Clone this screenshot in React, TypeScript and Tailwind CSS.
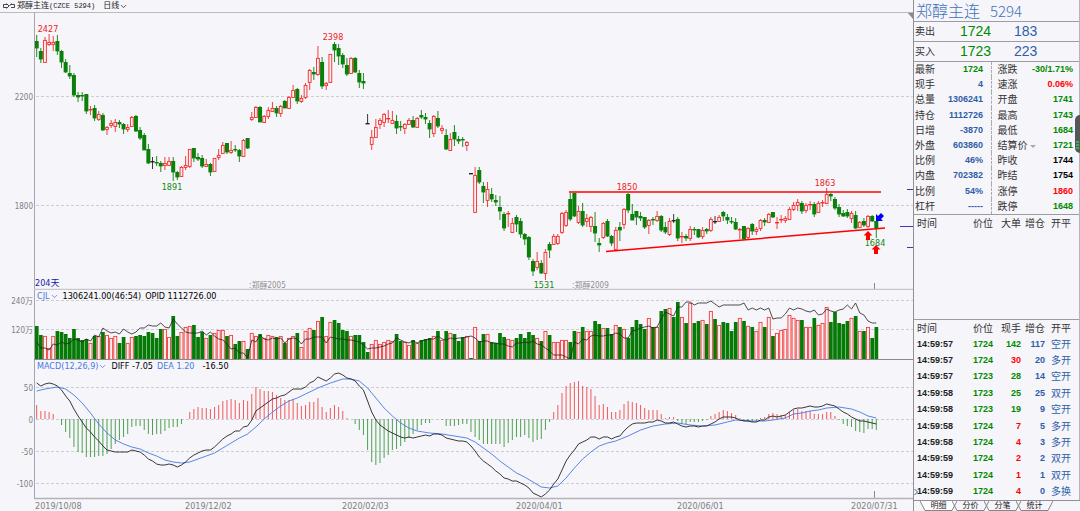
import { useState } from 'react';
import type { ReactNode } from 'react';
import clsx from 'clsx';
import { ChevronDown } from 'lucide-react';

// r = up (hollow red), g = down (solid green), k = unchanged
type Dir = 'r' | 'g' | 'k';

// direction, high, body top, body bottom, low
const CANDLES = `
g 35 41 48 57|g 48 51 59 63|r 37 40 62 62|r 34 42 44 46|r 36 42 44 51|g 35 41 51 55|g 50 51 62 68|g 59 62 72 73
g 65 73 76 79|g 73 75 95 97|g 92 95 97 102|g 92 95 96 101|g 94 94 111 114|r 106 109 110 115|g 105 108 118 121|r 111 114 119 121
g 113 115 130 131|r 126 127 129 135|r 120 123 125 128|r 119 122 126 132|g 120 122 124 128|g 123 124 129 134|r 124 127 129 132|r 116 117 126 127
g 115 116 131 132|g 127 130 138 140|g 133 135 150 150|g 144 149 163 164|k 157 161 162 169|g 156 162 163 166|g 161 163 166 172|r 157 163 165 170
r 157 161 165 166|g 157 161 172 181|g 171 172 177 180|r 166 167 176 177|r 156 165 167 170|r 149 149 166 168|g 148 148 158 162|g 153 157 159 161
g 155 158 166 168|r 159 164 166 167|g 163 164 172 176|r 158 158 171 172|r 149 155 157 160|r 142 145 153 153|g 143 143 152 154|r 141 150 152 154
g 145 149 150 152|g 149 150 156 162|r 139 140 156 157|g 138 138 148 149|r 112 117 119 121|r 106 107 117 117|g 106 107 122 122|r 115 116 122 123
r 107 110 116 119|r 102 108 111 112|g 106 108 113 117|r 105 106 113 117|g 100 101 108 108|r 96 97 108 109|r 85 90 97 98|g 88 89 101 104
r 95 98 101 103|r 83 85 97 99|r 69 70 82 90|g 67 72 74 80|r 46 58 74 76|g 57 62 86 89|r 82 83 85 90|r 54 54 82 83
g 42 44 50 62|g 44 48 56 65|g 53 55 64 68|g 58 65 74 76|r 57 58 73 74|g 57 58 72 73|g 70 73 82 88|g 73 81 83 89
k 114 123 124 124|r 130 137 144 150|r 119 127 137 137|r 118 120 124 129|r 113 114 122 127|r 110 118 119 123|r 111 120 123 123|g 115 121 128 134
g 121 126 127 131|r 123 124 128 134|r 118 120 124 125|g 116 120 127 128|r 117 118 127 127|g 110 115 117 119|g 113 117 119 124|g 120 123 129 138
r 115 116 133 137|g 111 118 126 128|r 125 128 130 134|g 129 135 149 150|r 133 139 150 151|g 125 132 139 146|g 136 139 141 144|g 137 139 140 147
r 141 142 145 151|k 173 173 174 174|r 167 175 212 212|g 167 170 182 184|g 182 186 192 203|r 182 189 200 207|g 188 194 199 202|g 195 200 202 206
g 196 207 211 220|g 212 214 228 231|r 211 213 214 227|r 218 223 232 233|g 215 217 224 232|g 218 221 234 238|g 233 234 239 245|g 236 237 257 260
g 259 261 271 276|r 252 261 267 270|g 260 263 273 274|r 249 252 273 280|g 242 244 250 258|r 234 236 244 244|r 234 236 243 245|r 212 213 232 234
r 210 212 225 227|g 193 199 219 221|g 193 193 216 217|r 206 211 222 224|g 203 211 225 227|r 214 218 221 227|r 216 217 226 232|g 212 226 233 242
g 238 243 245 252|r 222 223 237 239|g 219 221 236 237|g 235 236 243 246|r 227 230 249 251|g 222 227 230 241|r 208 209 224 229|g 193 194 210 213
g 204 214 220 220|g 211 211 217 225|g 212 216 218 221|g 217 217 227 229|r 219 220 225 234|g 217 219 220 225|r 211 216 220 222|g 215 216 230 232
g 222 227 232 234|r 218 221 234 236|k 214 220 221 223|g 217 219 238 241|r 232 236 237 243|g 234 236 238 241|r 226 229 238 241|g 227 229 230 235
g 229 229 237 238|r 227 230 236 239|g 228 229 231 234|r 217 219 230 232|k 216 221 222 224|r 215 217 221 222|g 211 212 216 221|g 214 217 220 224
g 217 221 222 224|g 218 222 229 230|r 228 229 230 239|g 226 226 239 239|r 227 228 237 239|g 223 224 231 235|r 227 229 231 235|r 219 220 228 231
g 218 220 222 226|r 213 214 222 223|g 212 212 217 218|r 217 222 223 229|r 215 219 220 223|r 216 218 220 223|r 207 209 219 220|r 202 205 209 211
r 199 202 205 211|g 201 203 211 214|r 203 205 210 213|r 201 204 205 210|g 202 204 214 217|r 201 203 212 213|r 200 202 203 207|r 188 194 203 204
g 193 194 196 201|g 197 199 208 210|g 204 207 214 217|g 210 213 216 217|g 209 212 216 218|r 211 213 218 223|g 211 215 228 229|r 221 222 227 228
g 218 221 225 227|r 215 216 226 228|g 215 216 221 222|g 221 221 228 238`
  .trim()
  .split(/[|\n]/)
  .map((row) => {
    const [dir, ...values] = row.split(' ');
    const [high, top, bottom, low] = values.map(Number);
    return { dir: dir as Dir, high, top, bottom, low };
  });

const VOLUMES = [
  33, 24, 23, 11, 23, 28, 27, 25, 21, 30, 21, 19, 20, 16, 23, 23, 27, 24, 21, 23, 16, 22, 16, 22, 23, 24, 23, 27, 26, 21,
  30, 30, 22, 43, 23, 27, 32, 33, 34, 22, 27, 21, 24, 26, 29, 29, 23, 24, 15, 18, 18, 10, 26, 23, 25, 21, 24, 23, 22, 23,
  16, 21, 23, 26, 12, 28, 31, 29, 38, 42, 23, 37, 39, 36, 29, 28, 23, 24, 24, 17, 7, 15, 19, 15, 17, 19, 18, 25, 18, 17,
  14, 19, 16, 19, 20, 21, 23, 28, 19, 28, 26, 25, 18, 22, 23, 1, 32, 18, 25, 25, 17, 16, 26, 22, 20, 19, 21, 25, 21, 27,
  24, 21, 18, 28, 24, 17, 17, 19, 19, 17, 28, 27, 32, 28, 28, 38, 35, 31, 31, 25, 34, 32, 30, 21, 32, 39, 35, 30, 41, 32,
  32, 48, 50, 51, 42, 57, 42, 36, 56, 36, 38, 39, 35, 48, 40, 34, 37, 36, 28, 37, 41, 38, 33, 32, 28, 37, 32, 42, 23, 26,
  29, 30, 44, 41, 39, 39, 32, 32, 41, 34, 36, 52, 37, 47, 36, 35, 38, 41, 43, 28, 28, 32, 21, 32,
];

const OPEN_INTEREST = [
  342, 348, 348, 350, 344, 345, 342, 344, 343, 339, 340, 342, 339, 341, 335, 337, 328, 331, 333, 332, 334, 329, 332, 334,
  332, 328, 328, 325, 326, 326, 323, 327, 328, 319, 324, 328, 332, 333, 333, 333, 331, 335, 332, 336, 339, 340, 344, 349,
  348, 353, 353, 358, 340, 342, 335, 339, 340, 338, 339, 338, 343, 339, 338, 339, 344, 339, 339, 337, 337, 337, 343, 337,
  338, 339, 339, 340, 340, 341, 342, 345, 349, 348, 348, 347, 346, 344, 343, 338, 340, 342, 343, 341, 343, 341, 340, 339,
  339, 336, 339, 340, 338, 339, 338, 338, 337, 336, 338, 342, 341, 341, 343, 343, 344, 344, 346, 347, 343, 343, 342, 343,
  341, 344, 345, 348, 351, 355, 355, 355, 357, 359, 342, 344, 339, 340, 336, 335, 336, 336, 335, 335, 333, 334, 338, 338,
  331, 330, 328, 327, 326, 328, 327, 319, 312, 314, 316, 307, 307, 302, 302, 305, 303, 303, 303, 301, 304, 307, 305, 305,
  305, 305, 305, 303, 310, 308, 310, 308, 310, 308, 319, 318, 318, 314, 308, 310, 308, 309, 311, 312, 310, 315, 314, 309,
  311, 312, 310, 309, 305, 309, 303, 313, 315, 321, 323, 323,
];

const HISTOGRAM = [
  14, 8, 8, 7, 5, 0, -6, -13, -19, -28, -33, -34, -38, -38, -38, -37, -37, -35, -30, -25, -21, -18, -15, -8, -7, -7, -11,
  -15, -16, -15, -15, -12, -9, -8, -8, -5, 0, 7, 10, 12, 11, 11, 10, 12, 14, 18, 19, 20, 19, 16, 19, 18, 25, 32, 30, 28,
  28, 27, 24, 21, 19, 19, 20, 16, 13, 14, 17, 17, 21, 12, 7, 11, 14, 12, 8, 1, 0, -5, -11, -16, -31, -43, -46, -44, -39,
  -36, -31, -30, -27, -23, -19, -15, -11, -6, -4, -4, 0, 0, -1, -7, -7, -7, -6, -5, -5, -13, -18, -21, -25, -25, -25, -25,
  -25, -28, -24, -21, -18, -18, -16, -19, -23, -21, -20, -11, -3, 7, 14, 26, 33, 36, 37, 38, 33, 32, 30, 23, 14, 15, 12, 7,
  7, 9, 15, 18, 17, 16, 14, 11, 9, 9, 9, 5, 1, 2, 2, -2, -5, -5, -3, -3, -3, -2, -1, 3, 5, 7, 9, 8, 6, 4, 1, -2, -3, -3,
  -2, 1, 2, 5, 6, 5, 4, 4, 7, 9, 10, 8, 8, 8, 5, 5, 5, 7, 7, 3, -1, -5, -7, -8, -12, -13, -14, -10, -10, -11,
];

const DIFF = [
  383, 386, 384, 383, 384, 386, 390, 396, 401, 409, 416, 422, 428, 432, 437, 441, 446, 450, 451, 452, 452, 452, 452, 450,
  451, 452, 455, 459, 461, 464, 465, 465, 464, 465, 467, 465, 462, 458, 455, 453, 451, 450, 450, 447, 443, 439, 436, 434,
  431, 431, 427, 426, 420, 411, 408, 405, 402, 399, 398, 396, 395, 392, 389, 389, 389, 387, 383, 381, 377, 379, 381, 378,
  374, 373, 375, 378, 379, 381, 386, 390, 401, 412, 420, 425, 428, 431, 433, 435, 437, 438, 437, 438, 437, 436, 435, 436,
  434, 434, 435, 438, 439, 440, 441, 441, 442, 446, 451, 457, 461, 464, 467, 471, 474, 478, 479, 481, 481, 483, 485, 488,
  493, 495, 497, 494, 490, 484, 479, 470, 461, 455, 450, 444, 442, 440, 437, 437, 439, 437, 437, 439, 437, 436, 431, 427,
  424, 423, 423, 423, 422, 422, 420, 421, 423, 423, 422, 424, 426, 427, 426, 426, 427, 426, 426, 424, 422, 419, 417, 417,
  417, 418, 420, 421, 421, 422, 422, 420, 420, 417, 416, 417, 416, 415, 412, 409, 408, 408, 407, 406, 407, 407, 406, 404,
  405, 406, 409, 412, 414, 417, 419, 421, 421, 422, 423, 424,
];

// the signal line is smooth, so only its turning points are kept: [bar, y]
const DEA = [
  [0, 391], [2, 389], [5, 387], [7, 389], [9, 395], [11, 403], [13, 413], [15, 424], [17, 433], [19, 440], [21, 444],
  [23, 447], [25, 449], [27, 453], [29, 456], [31, 460], [33, 462], [35, 463], [37, 462], [39, 459], [41, 456], [43, 453],
  [45, 448], [47, 443], [49, 438], [51, 434], [53, 427], [55, 419], [57, 412], [59, 406], [61, 401], [63, 398], [65, 394],
  [68, 388], [71, 383], [74, 379], [76, 379], [78, 381], [80, 388], [82, 398], [84, 408], [86, 416], [88, 423], [90, 428],
  [92, 431], [95, 433], [98, 434], [101, 436], [104, 438], [106, 442], [108, 448], [110, 454], [112, 461], [114, 467],
  [116, 473], [118, 477], [120, 482], [122, 487], [124, 488], [126, 486], [128, 478], [130, 468], [132, 459], [134, 452],
  [136, 446], [138, 443], [140, 441], [143, 436], [146, 430], [149, 426], [152, 424], [155, 423], [158, 425], [161, 426],
  [164, 425], [167, 422], [169, 420], [173, 421], [176, 421], [178, 420], [181, 418], [183, 414], [185, 413], [187, 411],
  [189, 410], [191, 408], [194, 407], [197, 409], [199, 412], [201, 416], [203, 418],
];

const FIRST_X = 36.7;
const STEP = 4.136;
const barX = (i: number) => FIRST_X + i * STEP;
const toPoints = (rows: number[][]) => rows.map(([i, y]) => `${barX(i).toFixed(1)},${y}`).join(' ');

const STROKE: Record<Dir, string> = { r: '#f42a2a', g: '#0a7f0a', k: '#222222' };

function GridLine({ y, label }: { y: number; label: string }) {
  return (
    <>
      <line x1="36" x2="913" y1={y + 0.5} y2={y + 0.5} stroke="#cdcdd3" strokeDasharray="3 2" />
      <text x="33" y={y + 4} textAnchor="end" className="fill-[#808080] text-[8px]">
        {label}
      </text>
    </>
  );
}

function UpArrow({ x, y }: { x: number; y: number }) {
  return <path d={`M${x} ${y}l4.5 4.5h-2.5v4.5h-4v-4.5h-2.5z`} fill="#ff0000" />;
}

function PriceChart() {
  return (
    <svg viewBox="0 12 913 278" className="block w-full" role="img" aria-label="日线">
      <GridLine y={96} label="2200" />
      <GridLine y={205} label="1800" />

      {CANDLES.map(({ dir, high, top, bottom, low }, i) => {
        const x = barX(i);
        const tall = bottom - top > 1;
        return (
          <g key={i} stroke={STROKE[dir]} strokeWidth="0.9">
            {dir === 'r' && tall ? (
              <>
                <path d={`M${x} ${high}V${top}M${x} ${bottom}V${low}`} />
                <rect x={x - 1.4} y={top + 0.4} width="2.8" height={bottom - top} fill="#f9f0f3" />
              </>
            ) : (
              <>
                <path d={`M${x} ${high}V${low}`} />
                <rect
                  x={x - 2}
                  y={top}
                  width="4"
                  height={Math.max(1, bottom - top + 0.4)}
                  fill={STROKE[dir]}
                  stroke="none"
                />
              </>
            )}
          </g>
        );
      })}

      {/* trend lines */}
      <path d="M569 192H881M606 251.5L885 228" stroke="#ff0000" strokeWidth="1.5" fill="none" />

      {/* price labels */}
      <g className="text-[9px]" textAnchor="middle" fill="#ee1c25">
        <text x="48" y="32">2427</text>
        <text x="333" y="40">2398</text>
        <text x="627" y="190">1850</text>
        <text x="825" y="186">1863</text>
      </g>
      <g className="text-[9px]" textAnchor="middle" fill="#118811">
        <text x="172" y="190">1891</text>
        <text x="544" y="288">1531</text>
        <text x="875" y="246">1684</text>
      </g>

      {/* signals */}
      <UpArrow x={868} y={231} />
      <UpArrow x={876} y={245} />
      <path d="M876 221v-7l2 2 3-3 3 3-3 3 2 2z" fill="#0000ff" />

      {/* price scale markers */}
      <path d="M907 189.5h6M900 226.5h13M907 247.5h6" stroke="#3a3ab8" />

      <path d="M874.5 283v7" stroke="#8a8a8a" />
      <text x="35" y="286" className="text-[9px]" fill="#1a1aa6">204天</text>
      <g className="text-[8px]" fill="#909090">
        <text x="249" y="288">:郑醇2005</text>
        <text x="572" y="288">:郑醇2009</text>
      </g>
      <path d="M913 12v7l-6-7z" fill="#8a8a8a" />
      <path d="M0 12.5H913" stroke="#bcbcc0" />
      <path d="M34.5 12V290" stroke="#a6a6ac" />
      <path d="M34 289.5H913" stroke="#c8c8cc" strokeWidth="1.5" />
    </svg>
  );
}

function VolumeChart() {
  return (
    <svg viewBox="0 290 913 70" className="block w-full" role="img" aria-label="CJL">
      <GridLine y={300} label="240万" />
      <GridLine y={329} label="120万" />
      {VOLUMES.map((h, i) => {
        const x = barX(i);
        return CANDLES[i].dir === 'r' ? (
          <rect key={i} x={x - 1.5} y={359.4 - h} width="3" height={h} fill="#f9eff2" stroke="#f23c3c" strokeWidth="0.9" />
        ) : (
          <rect key={i} x={x - 1.8} y={359 - h} width="3.7" height={h} fill="#067a06" />
        );
      })}
      <polyline points={toPoints(OPEN_INTEREST.map((y, i) => [i, y]))} fill="none" stroke="#222222" strokeWidth="0.8" />
      <path d="M34.5 290V360" stroke="#a6a6ac" />
      <path d="M34 359.5H913" stroke="#8a8a90" />
    </svg>
  );
}

const DATES: [number, string][] = [
  [35, '2019/10/08'],
  [185, '2019/12/02'],
  [342, '2020/02/03'],
  [516, '2020/04/01'],
  [677, '2020/06/01'],
  [851, '2020/07/31'],
];

function MacdChart() {
  return (
    <svg viewBox="0 360 913 151" className="block w-full" role="img" aria-label="MACD">
      <GridLine y={387} label="50" />
      <GridLine y={419} label="0" />
      <GridLine y={451} label="-50" />
      <GridLine y={483} label="-100" />
      {HISTOGRAM.map((h, i) => (
        <line
          key={i}
          x1={barX(i)}
          x2={barX(i)}
          y1="419"
          y2={419 - h}
          stroke={h > 0 ? '#f04848' : '#3c973c'}
          strokeWidth="0.9"
        />
      ))}
      <polyline points={toPoints(DEA)} fill="none" stroke="#4a78e4" strokeWidth="0.9" />
      <polyline points={toPoints(DIFF.map((y, i) => [i, y]))} fill="none" stroke="#222222" strokeWidth="0.9" />
      <path d="M874.5 491v8" stroke="#8a8a8a" />
      <path d="M34.5 360V499" stroke="#a6a6ac" />
      <path d="M34 498.5H913" stroke="#b4b4b8" strokeWidth="1.5" />
      {DATES.map(([x, label]) => (
        <text key={label} x={x} y="509" className="fill-[#808080] text-[9px]">
          {label}
        </text>
      ))}
    </svg>
  );
}

function IndicatorBar({ name, children }: { name: string; children: ReactNode }) {
  return (
    <div className="absolute top-0 left-[37px] flex h-3 items-center gap-1 text-[9px] leading-3 whitespace-pre">
      <button className="flex items-center text-[#4a78e4]">
        {name}
        <ChevronDown size={9} />
      </button>
      {children}
    </div>
  );
}

type Tone = 'green' | 'red' | 'blue' | 'black';
const TONES: Record<Tone, string> = {
  green: 'text-[#008a00]',
  red: 'text-[#ff0000]',
  blue: 'text-[#2f5ea8]',
  black: 'text-black',
};

const QUOTES: [string, string, Tone, string, string, Tone][] = [
  ['最新', '1724', 'green', '涨跌', '-30/1.71%', 'green'],
  ['现手', '4', 'blue', '速涨', '0.06%', 'red'],
  ['总量', '1306241', 'blue', '开盘', '1741', 'green'],
  ['持仓', '1112726', 'blue', '最高', '1743', 'green'],
  ['日增', '-3870', 'blue', '最低', '1684', 'green'],
  ['外盘', '603860', 'blue', '结算价', '1721', 'green'],
  ['比例', '46%', 'blue', '昨收', '1744', 'black'],
  ['内盘', '702382', 'blue', '昨结', '1754', 'black'],
  ['比例', '54%', 'blue', '涨停', '1860', 'red'],
  ['杠杆', '-----', 'blue', '跌停', '1648', 'green'],
];

const TRADES: [string, string, string, Tone, string, string][] = [
  ['14:59:57', '1724', '142', 'green', '117', '空开'],
  ['14:59:57', '1724', '30', 'red', '20', '多开'],
  ['14:59:57', '1723', '28', 'green', '14', '空开'],
  ['14:59:58', '1723', '25', 'green', '25', '双开'],
  ['14:59:58', '1723', '19', 'green', '9', '空开'],
  ['14:59:58', '1724', '7', 'red', '5', '多开'],
  ['14:59:58', '1724', '4', 'red', '3', '多开'],
  ['14:59:59', '1724', '2', 'red', '2', '双开'],
  ['14:59:59', '1724', '1', 'red', '1', '双开'],
  ['14:59:59', '1724', '4', 'red', '0', '多换'],
];

const NUM = 'font-["Liberation_Sans",sans-serif] text-[9px] font-bold';

function DepthRow({ label, price, size }: { label: string; price: string; size: string }) {
  return (
    <div className="flex h-5 items-center border-b border-[#9c9ca2] pl-px">
      <span className="w-[45px] text-[10px] text-[#333333]">{label}</span>
      <span className="w-[54px] text-[14px] text-[#008a00]">{price}</span>
      <span className="text-[14px] text-[#2f5ea8]">{size}</span>
    </div>
  );
}

function TradeHead({ volume }: { volume: string }) {
  return (
    <thead>
      <tr className="h-4 text-[#333333]">
        <th className="w-12 pl-[3px] text-left font-normal">时间</th>
        <th className="w-[31px] text-right font-normal">价位</th>
        <th className="w-7 text-right font-normal">{volume}</th>
        <th className="w-6 text-right font-normal">增仓</th>
        <th className="pl-[6px] text-left font-normal">开平</th>
      </tr>
    </thead>
  );
}

const TABS = ['明细', '分价', '分笔', '统计'];

function QuotePanel() {
  const [tab, setTab] = useState('明细');

  return (
    <aside className="relative flex w-[167px] shrink-0 flex-col border-l border-[#8f8f96] font-['Liberation_Sans','Noto_Sans_CJK_SC',sans-serif] text-[10px] leading-[15px]">
      <div className="flex flex-1 flex-col border-r border-[#b4b4ba]">
        <h1 className="flex items-center gap-[10px] border-b border-[#9c9ca2] pl-[2px] font-['Noto_Sans_CJK_SC',sans-serif] text-[16px] leading-[21px] font-light text-[#3f72b8]">
          <span>郑醇主连</span>
          <span className="text-[15px]">5294</span>
        </h1>
        <DepthRow label="卖出" price="1724" size="183" />
        <DepthRow label="买入" price="1723" size="223" />

        <div className="border-b border-[#9c9ca2]">
          <table className="h-[152px] w-full table-fixed border-collapse">
            <tbody>
              {QUOTES.map(([label, value, tone, label2, value2, tone2], i) => (
                <tr key={i}>
                  <th className="w-[23px] pl-px text-left font-normal whitespace-nowrap text-[#333333]">{label}</th>
                  <td className={clsx('w-[46px] text-right', NUM, TONES[tone])}>{value}</td>
                  <td className="w-[8px] border-r border-dashed border-[#aaaaaf]" />
                  <th className="w-[38px] pl-[6px] text-left font-normal whitespace-nowrap text-[#333333]">
                    {label2}
                    {label2 === '结算价' && (
                      <svg viewBox="0 0 6 3" className="ml-[2px] inline-block h-[3px] w-[6px]" aria-hidden="true">
                        <path d="M0 0h6L3 3z" fill="#a8a8ac" />
                      </svg>
                    )}
                  </th>
                  <td className={clsx('pr-[6px] text-right', NUM, TONES[tone2])}>{value2}</td>
                </tr>
              ))}
            </tbody>
          </table>
        </div>

        <div className="min-h-24 flex-1 border-b border-[#9c9ca2]">
          <table className="w-full table-fixed border-collapse">
            <TradeHead volume="大单" />
          </table>
        </div>

        <table className="h-[180px] w-full table-fixed border-collapse">
          <TradeHead volume="现手" />
          <tbody>
            {TRADES.map(([time, price, volume, tone, change, kind], i) => (
              <tr key={i}>
                <td className={clsx('relative pl-[3px] text-[#222222]', NUM)}>
                  {i === TRADES.length - 1 && (
                    <svg viewBox="0 0 4 8" className="absolute top-1 left-0 h-2 w-1" aria-hidden="true">
                      <path d="M0.5 1L3.5 4L0.5 7" fill="none" stroke="#2f5ea8" />
                    </svg>
                  )}
                  {time}
                </td>
                <td className={clsx('text-right', NUM, TONES.green)}>{price}</td>
                <td className={clsx('text-right', NUM, TONES[tone])}>{volume}</td>
                <td className={clsx('text-right', NUM, TONES.blue)}>{change}</td>
                <td className="pl-[6px] whitespace-nowrap text-[#2f5ea8]">{kind}</td>
              </tr>
            ))}
          </tbody>
        </table>
      </div>

      <nav className="flex h-[11px] border-t border-[#8f8f96] pl-[6px]">
        {TABS.map((name) => (
          <button
            key={name}
            onClick={() => setTab(name)}
            className="relative -mr-[5px] h-[10px] w-[37px] text-[8px] leading-[10px] text-[#222222]"
          >
            <svg viewBox="0 0 37 10" className="absolute inset-0 h-full w-full" aria-hidden="true">
              <path d="M0 0L5 9.5H32L37 0" fill={tab === name ? '#ffffff' : 'none'} stroke="#77777c" strokeWidth="0.9" />
            </svg>
            <span className="relative">{name}</span>
          </button>
        ))}
      </nav>

      {/* scroll handle */}
      <div className="absolute top-[115px] right-0 flex h-[38px] w-[5px] flex-col justify-end gap-px rounded-l-full bg-[#55555a] pb-1 pl-px">
        <span className="h-[2px] w-[3px] bg-[#3fae4a]" />
        <span className="h-[2px] w-[3px] bg-[#3fae4a]" />
        <span className="h-[2px] w-[3px] bg-[#3fae4a]" />
      </div>
    </aside>
  );
}

export default function App() {
  return (
    <div className="flex min-h-screen items-stretch bg-[#f5f5fa] font-['DejaVu_Sans_Condensed','Noto_Sans_CJK_SC',sans-serif]">
      <main className="min-w-0 flex-1">
        <header className="flex h-3 items-center pl-[3px] text-[8px] leading-3 text-[#222222]">
          <svg viewBox="0 0 12 6" className="mr-[2px] h-[6px] w-3" fill="none" stroke="#333333" aria-hidden="true">
            <path d="M4 4.5H0.5V1.5H4M3.5 0.5L6 3L3.5 5.5M8 1.5H11.5V4.5H8M8.5 0.5L6.5 3" strokeWidth="0.9" />
          </svg>
          <h1 className="flex items-center">
            郑醇主连
            <span className="font-['Liberation_Mono',monospace] text-[7px]">(CZCE 5294)</span>
          </h1>
          <button className="ml-2 flex items-center">
            日线
            <ChevronDown size={9} />
          </button>
        </header>
        <PriceChart />
        <div className="relative">
          <VolumeChart />
          <IndicatorBar name="CJL">
            <span>1306241.00(46:54)</span>
            <span>OPID 1112726.00</span>
          </IndicatorBar>
        </div>
        <div className="relative">
          <MacdChart />
          <IndicatorBar name="MACD(12,26,9)">
            <span>DIFF -7.05</span>
            <span className="text-[#4a78e4]">DEA 1.20</span>
            <span className="ml-1">-16.50</span>
          </IndicatorBar>
        </div>
      </main>
      <QuotePanel />
    </div>
  );
}
